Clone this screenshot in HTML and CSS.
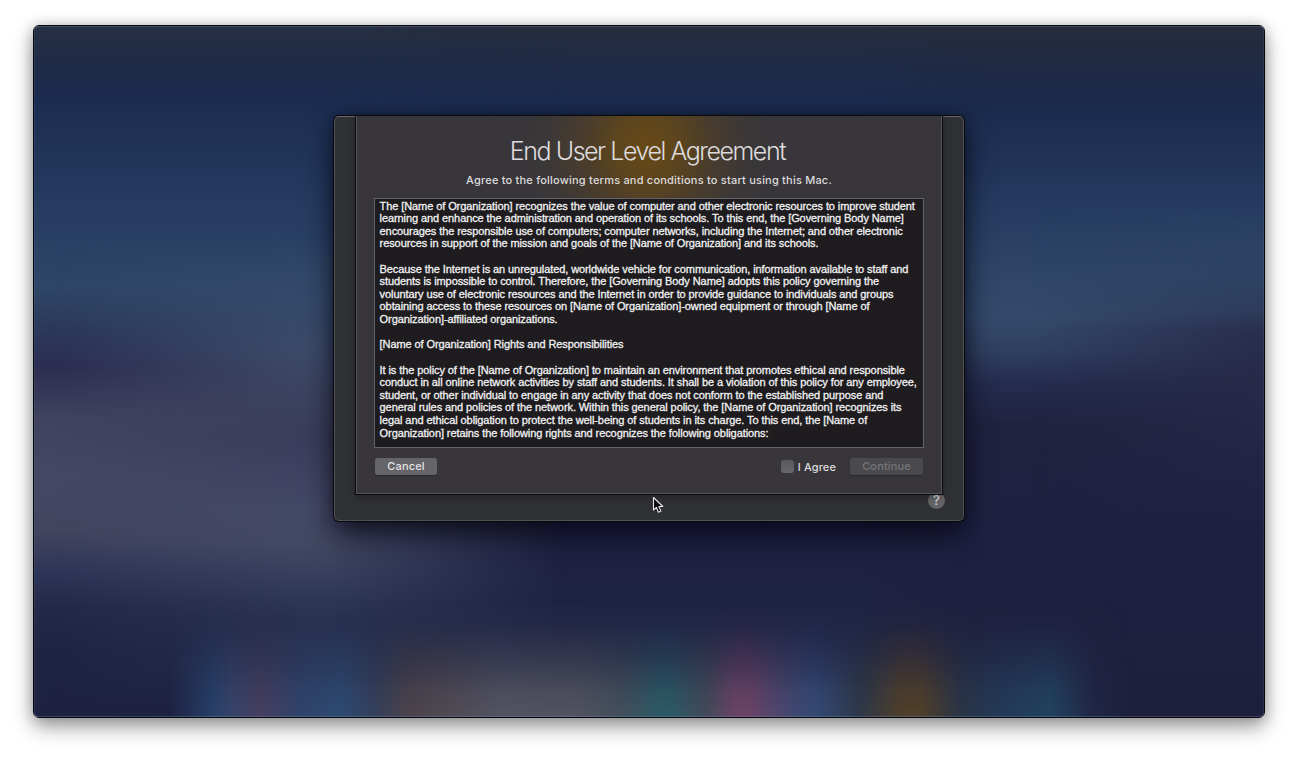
FILE: index.html
```html
<!DOCTYPE html>
<html lang="en">
<head>
<meta charset="utf-8">
<title>End User Level Agreement</title>
<link rel="stylesheet" href="styles.css">
</head>
<body>
<main class="screen">
  <div class="wallpaper">
    <div class="haze haze-left"></div>
    <div class="haze haze-right"></div>
    <div class="dock-blur"></div>
  </div>
  <section class="dialog">
    <div class="sheet">
      <h1 class="title">End User Level Agreement</h1>
      <p class="subtitle">Agree to the following terms and conditions to start using this Mac.</p>
      <div class="terms">
        <p>The [Name of Organization] recognizes the value of computer and other electronic resources to improve student<br>learning and enhance the administration and operation of its schools. To this end, the [Governing Body Name]<br>encourages the responsible use of computers; computer networks, including the Internet; and other electronic<br>resources in support of the mission and goals of the [Name of Organization] and its schools.</p>
        <p>Because the Internet is an unregulated, worldwide vehicle for communication, information available to staff and<br>students is impossible to control. Therefore, the [Governing Body Name] adopts this policy governing the<br>voluntary use of electronic resources and the Internet in order to provide guidance to individuals and groups<br>obtaining access to these resources on [Name of Organization]-owned equipment or through [Name of<br>Organization]-affiliated organizations.</p>
        <p>[Name of Organization] Rights and Responsibilities</p>
        <p>It is the policy of the [Name of Organization] to maintain an environment that promotes ethical and responsible<br>conduct in all online network activities by staff and students. It shall be a violation of this policy for any employee,<br>student, or other individual to engage in any activity that does not conform to the established purpose and<br>general rules and policies of the network. Within this general policy, the [Name of Organization] recognizes its<br>legal and ethical obligation to protect the well-being of students in its charge. To this end, the [Name of<br>Organization] retains the following rights and recognizes the following obligations:</p>
      </div>
      <div class="actions">
        <button class="button">Cancel</button>
        <label class="agree"><span class="checkbox"></span><span>I Agree</span></label>
        <button class="button button-disabled">Continue</button>
      </div>
    </div>
    <span class="help">?</span>
  </section>
  <svg class="cursor" width="13" height="19" viewBox="0 0 13 19"><path d="M1.5 1.5V14L4.4 11.3L6.4 16.2L8.9 15.1L6.9 10.5H10.8Z" fill="#08080c" stroke="#e4e4ea" stroke-width="1.1" stroke-linejoin="round"/></svg>
</main>
</body>
</html>
```
FILE: styles.css
```css
* { box-sizing: border-box; }
body { margin: 0; height: 759px; overflow: hidden; background: #fff; padding: 25px 33px; }
.screen {
  position: relative; width: 1232px; height: 693px; padding-top: 90px;
  border: 1px solid #05070e; border-radius: 6px;
  box-shadow: 0 9px 20px rgba(0,0,0,.38), 0 0 14px rgba(0,0,0,.2);
  display: flex; justify-content: center; align-items: flex-start;
}
.wallpaper {
  position: absolute; inset: 0; border-radius: 5px; overflow: hidden;
  background: linear-gradient(#272e3e 0, #1f2b46 35px, #1b2b4e 75px, #1d3156 130px, #223859 180px, #243c61 230px, #273b5f 290px, #222a4c 370px, #20234a 430px, #1e2042 500px, #1f2444 600px, #1d203f 100%);
}
.wallpaper::after { content: ""; position: absolute; inset: 0; border-radius: 5px; border: 1px solid rgba(120,145,180,.16); border-top-color: rgba(130,150,180,.3); border-bottom-color: rgba(130,150,180,.3); }
.haze { position: absolute; top: 0; bottom: 0; }
.haze-left {
  left: 0; width: 560px;
  background:
    linear-gradient(#272f42 0, #1e2b47 40px, #1c2c50 75px, #203458 125px, #283f63 205px, #2e4667 260px, #2b3757 308px, #2d2d51 342px, #40425f 392px, #444865 450px, #42455f 505px, #2f3557 545px, #242949 580px, #1f2443 625px, #1e2140 100%);
  mask-image: linear-gradient(90deg, #000 300px, rgba(0,0,0,.7) 370px, transparent 530px);
}
.haze-left::after {
  content: ""; position: absolute; inset: 0;
  background: linear-gradient(transparent 210px, #33496a 265px, #3b4a68 325px, #3c425f 370px, #3a3d5b 415px, #434866 480px, #434863 518px, #343c5b 558px, #28304f 595px, #242c4a 640px, transparent 690px);
  mask-image: linear-gradient(90deg, transparent 20px, #000 260px);
}
.haze-right {
  right: 0; width: 420px;
  background: linear-gradient(#272c3d 0, #1f2a43 38px, #1b2a4b 75px, #1f3155 125px, #263d61 190px, #2f4668 250px, #344a6a 292px, #2f4060 325px, #252c4e 358px, #20223f 400px, #1f2142 500px, #1f203f 600px, #1d1f3d 100%);
  mask-image: linear-gradient(270deg, #000 280px, transparent 400px);
}
.haze-right::after {
  content: ""; position: absolute; inset: 0;
  background: linear-gradient(transparent 180px, #2d4363 250px, #2e3c5b 285px, #2a2f4f 305px, #272a48 350px, #222545 430px, transparent 500px);
  mask-image: linear-gradient(90deg, transparent 190px, #000 410px);
}
.dock-blur {
  position: absolute; left: 120px; right: 110px; bottom: 0; height: 118px;
  background: linear-gradient(90deg, transparent 15px, #27416a 60px, #37446a 77px, #463f60 107px, #30456c 147px, #2e4b72 187px, #35405a 222px, #4b434b 252px, #514a52 290px, #535462 347px, #51535f 427px, #434f5c 467px, #2d5a66 505px, #2d5a66 517px, #434a5a 552px, #6a4467 580px, #6a4467 597px, #434870 637px, #344a76 662px, #2f3848 707px, #50402a 747px, #50402a 767px, #2a3547 807px, #233a58 847px, #22435f 897px, rgba(35,45,75,.5) 940px, transparent 975px);
  mask-image: linear-gradient(transparent, rgba(0,0,0,.1) 28px, rgba(0,0,0,.45) 60px, rgba(0,0,0,.85) 92px, #000);
}
.dialog {
  position: relative; width: 630px; height: 405px;
  border: 1px solid #515257; border-top-color: #6a6b70; border-radius: 5px; background: #303135;
  box-shadow: 0 0 0 1px #07080b, 0 14px 30px rgba(5,6,18,.75), 0 0 14px rgba(0,0,0,.3);
  display: flex; justify-content: center; align-items: flex-start;
}
.sheet {
  position: relative; z-index: 1; width: 586px; height: 378px; margin-top: -1px; padding: 19px 17px 0;
  border: 1px solid #55555a; border-top: 0;
  background: radial-gradient(ellipse 125px 130px at 290px 32px, rgba(103,73,22,1), rgba(99,71,24,.85) 25%, rgba(94,68,28,.42) 54%, rgba(80,64,40,.13) 80%, transparent), #38363a;
  box-shadow: 0 0 0 1px #0a0b0d, 0 2px 8px rgba(0,0,0,.4);
  font-family: Inter, "Liberation Sans", sans-serif; color: #dddbdd;
}
.title { margin: 0; height: 32px; line-height: 32px; text-align: center; font-size: 25px; font-weight: 300; letter-spacing: -1.45px; text-indent: -3px; white-space: nowrap; }
.subtitle { margin: 5px 0 9px; height: 17px; line-height: 17px; text-align: center; font-size: 11px; font-weight: 500; letter-spacing: .21px; white-space: nowrap; }
.terms {
  height: 250px; padding: .6px 4.6px; overflow: hidden; border: 1px solid #626165; background: #1e1c1f;
  font: 11px/12.61px "Liberation Sans", sans-serif; letter-spacing: -.088px; color: #f1f1f2; white-space: nowrap;
  -webkit-text-stroke: .3px #f1f1f2;
}
.terms p { margin: 0 0 12.61px; }
.actions { display: flex; align-items: center; height: 18px; margin: 9px 1px 0; }
.button { width: 62px; height: 17px; padding: 0; border: 0; border-radius: 2.5px; background: #656468; box-shadow: 0 1px 1px rgba(0,0,0,.3); color: #e4e3e6; font: 500 11px/17px Inter, sans-serif; letter-spacing: .15px; }
.agree { display: flex; align-items: center; gap: 4px; margin-left: auto; margin-right: 14px; font-size: 11px; font-weight: 500; letter-spacing: .1px; padding-top: 1px; }
.checkbox { width: 13px; height: 13px; border-radius: 3px; background: linear-gradient(#59585c, #67666a); }
.button-disabled { width: 73px; background: #4a494d; color: #77767a; }
.help { position: absolute; right: 18px; top: 375px; width: 17px; height: 17px; border-radius: 50%; background: #646468; color: #d7d7da; font: 500 13px/17px Inter, sans-serif; text-align: center; }
.cursor { position: absolute; left: 618px; top: 470px; z-index: 2; }
```
